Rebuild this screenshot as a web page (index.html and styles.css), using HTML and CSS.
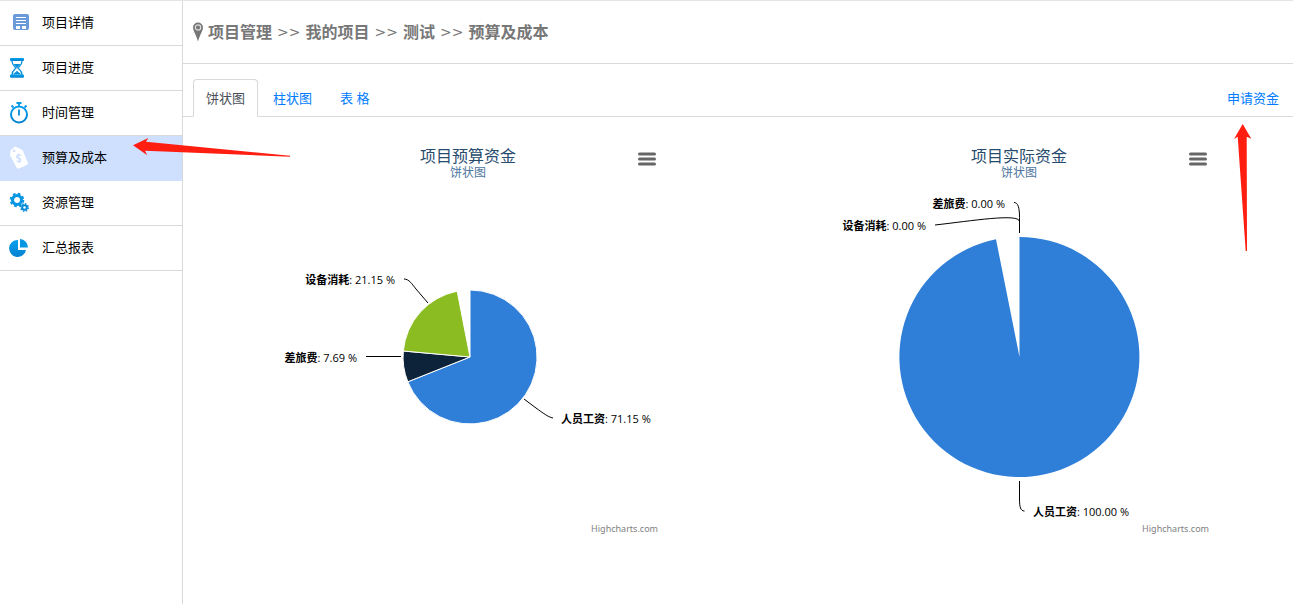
FILE: index.html
```html
<!DOCTYPE html>
<html lang="zh-CN">
<head>
<meta charset="utf-8">
<meta name="viewport" content="width=device-width, initial-scale=1">
<title>预算及成本</title>
<link rel="stylesheet" href="styles.css">
</head>
<body>
<svg class="defs" width="0" height="0" aria-hidden="true">
  <linearGradient id="blue" x1="0" y1="0" x2="0" y2="1"><stop offset="0" stop-color="#00a0ee"/><stop offset="1" stop-color="#0782cf"/></linearGradient>
</svg>
<div class="layout">
  <nav class="sidebar">
    <a class="side-link" href="#"><svg class="side-icon" viewBox="0 0 24 24" aria-hidden="true"><rect x="4" y="3" width="16" height="16" rx="2" fill="#6a9bd8"/><path d="M7 6.500h10M7 9.500h10M7 12.500h10" stroke="#fff" stroke-width="1"/><path d="M7 15h4v3H7zM13 15h4v3h-4z" fill="#fff"/></svg><span class="side-text">项目详情</span></a>
    <a class="side-link" href="#"><svg class="side-icon" viewBox="0 0 24 24" aria-hidden="true"><rect x="1" y="2" width="14" height="3" rx="1" fill="url(#blue)"/><rect x="1" y="18.500" width="14" height="3.300" rx="1" fill="url(#blue)"/><path d="M3 5c0 4 2 5 4 7-2 2-4 3-4 7M13 5c0 4-2 5-4 7 2 2 4 3 4 7" fill="none" stroke="#0a91dc" stroke-width="1.300"/><path d="M4.500 8h7L8 12zM4 18.500c1-2 3-2 4-4 1 2 3 2 4 4z" fill="#0a91dc"/></svg><span class="side-text">项目进度</span></a>
    <a class="side-link" href="#"><svg class="side-icon" viewBox="0 0 24 24" aria-hidden="true"><circle cx="10" cy="13.500" r="8" fill="none" stroke="url(#blue)" stroke-width="2"/><path d="M7.500 2h5M10 2v4M2.500 4.500l2 2M15.500 6.500l2-2" stroke="#0898e4" stroke-width="1.800"/><path d="M10 8.500v6" stroke="#078bd7" stroke-width="1.800"/></svg><span class="side-text">时间管理</span></a>
    <a class="side-link active" href="#"><svg class="side-icon" viewBox="0 0 24 24" aria-hidden="true"><path fill="#fff" fill-rule="evenodd" d="M1.500 4.500L6 .5l7.500 3.500 5.500 13c0 1-.5 1.500-1.300 2L10 22.600c-1 .4-2 0-2.500-1L1 9zM5 3.500a1.300 1.300 0 1 0 .1 0z"/><path d="M12 9.500c-1.500-1.300-5-.4-4.500 1.500.5 2 4 .5 4.300 2.700.2 2-3 2.500-4 1M8.800 7.500l2 9.500" fill="none" stroke="#cfe0ff" stroke-width="1.300"/></svg><span class="side-text">预算及成本</span></a>
    <a class="side-link" href="#"><svg class="side-icon" viewBox="0 0 24 24" aria-hidden="true"><circle cx="8" cy="9" r="4.500" fill="none" stroke="#0796e2" stroke-width="3"/><circle cx="8" cy="9" r="6.300" fill="none" stroke="#0796e2" stroke-width="2" stroke-dasharray="2.700 2.248"/><circle cx="15.500" cy="16.500" r="2.300" fill="none" stroke="#078bd7" stroke-width="2"/><circle cx="15.500" cy="16.500" r="3.700" fill="none" stroke="#078bd7" stroke-width="1.500" stroke-dasharray="1.500 1.406"/></svg><span class="side-text">资源管理</span></a>
    <a class="side-link" href="#"><svg class="side-icon" viewBox="0 0 24 24" aria-hidden="true"><path d="M9 4a8.500 8.500 0 1 0 8 10H9z" fill="url(#blue)"/><path d="M11 3v8.500h8A8.500 8.500 0 0 0 11 3z" fill="#0796e2"/></svg><span class="side-text">汇总报表</span></a>
    <svg class="pointer pointer-left" viewBox="0 0 158 20" aria-hidden="true"><path d="M0 8.300L15.300 1 13 4.700 157 18.700v1L12 13.700l2.300 4.600z"/></svg>
  </nav>
  <main class="main">
    <header class="crumbs">
      <svg class="pin" viewBox="0 0 10 20" aria-hidden="true"><path d="M5 .5a5 5 0 0 0-5 5C0 9 3 12 5 19.500 7 12 10 9 10 5.500a5 5 0 0 0-5-5z" fill="#777"/><circle cx="5" cy="5.500" r="2.700" fill="none" stroke="#ddd" stroke-width="1.200"/></svg>
      <span>项目管理</span><span class="sep">&gt;&gt;</span><span>我的项目</span><span class="sep">&gt;&gt;</span><span>测试</span><span class="sep">&gt;&gt;</span><span>预算及成本</span>
    </header>
    <div class="tabs">
      <a class="tab active" href="#">饼状图</a>
      <a class="tab" href="#">柱状图</a>
      <a class="tab" href="#">表 格</a>
      <a class="apply" href="#">申请资金</a>
      <svg class="pointer pointer-up" viewBox="0 0 18 128" aria-hidden="true"><path d="M8.700 0l8.600 14.700-4.600-2L13 127h-1.300L3.700 12.700 0 15z"/></svg>
    </div>
    <div class="charts">
      <section class="chart">
        <svg class="plot" viewBox="0 0 400 400" role="img" aria-label="项目预算资金">
          <text class="title" x="200" y="25">项目预算资金</text>
          <text class="subtitle" x="200" y="40">饼状图</text>
          <g stroke="#fff" stroke-linejoin="round">
            <path fill="#2f7ed8" d="M202 220V153A67 67 0 1 1 139.800 244.800z"/>
            <path fill="#0d233a" d="M202 220L139.800 244.800A67 67 0 0 1 135.300 214z"/>
            <path fill="#8bbc21" d="M202 220L135.300 214A67 67 0 0 1 189.200 154.200z"/>
          </g>
          <path class="lead" d="M136 142c5 0 8 5 12 10l12 14M98 219.500h35M256 262l12 9c7 5 12 9 17 10"/>
          <text class="label" x="127" y="147" text-anchor="end"><tspan>设备消耗</tspan>: 21.15 %</text>
          <text class="label" x="89" y="225" text-anchor="end"><tspan>差旅费</tspan>: 7.69 %</text>
          <text class="label" x="293" y="286"><tspan>人员工资</tspan>: 71.15 %</text>
          <text class="credit" x="390" y="395">Highcharts.com</text>
        </svg>
        <button class="menu" type="button" aria-label="图表菜单"><svg viewBox="0 0 18 14" aria-hidden="true"><path d="M1.500 2h15M1.500 7h15M1.500 12h15"/></svg></button>
      </section>
      <section class="chart">
        <svg class="plot" viewBox="0 0 400 400" role="img" aria-label="项目实际资金">
          <text class="title" x="200" y="25">项目实际资金</text>
          <text class="subtitle" x="200" y="40">饼状图</text>
          <path fill="#2f7ed8" d="M200.500 220V100A120 120 0 1 1 177 102.300z"/>
          <path class="lead" d="M195 65.500c4 0 5.500 5 5.500 15V96M116 88c36-4 84-12 84.500-3.500M200.500 344v18c0 8 1 12 5 12"/>
          <text class="label" x="186" y="71" text-anchor="end"><tspan>差旅费</tspan>: 0.00 %</text>
          <text class="label" x="107" y="93" text-anchor="end"><tspan>设备消耗</tspan>: 0.00 %</text>
          <text class="label" x="214" y="379"><tspan>人员工资</tspan>: 100.00 %</text>
          <text class="credit" x="390" y="395">Highcharts.com</text>
        </svg>
        <button class="menu" type="button" aria-label="图表菜单"><svg viewBox="0 0 18 14" aria-hidden="true"><path d="M1.500 2h15M1.500 7h15M1.500 12h15"/></svg></button>
      </section>
    </div>
  </main>
</div>
</body>
</html>
```
FILE: styles.css
```css
* { box-sizing: border-box; }
body {
  margin: 0;
  background: #fff;
  color: #000;
  font: 13px/20px "Open Sans", "Noto Sans CJK SC", sans-serif;
}
a { text-decoration: none; }
.defs { position: absolute; }
.layout {
  display: flex;
  min-height: 100vh;
  border-top: 1px solid #e4e4e4;
}
.sidebar {
  position: relative;
  flex: 0 0 183px;
  border-right: 1px solid #d9d9d9;
}
.side-link {
  display: flex;
  align-items: center;
  gap: 9px;
  height: 45px;
  padding-left: 9px;
  border-bottom: 1px solid #d9d9d9;
  color: #000;
}
.side-link.active {
  background: #cfe0ff;
  border-color: #cfe0ff;
}
.side-icon { width: 24px; height: 24px; }
.side-text { padding-bottom: 2px; }
.main { flex: 1; min-width: 0; }
.crumbs {
  display: flex;
  align-items: center;
  gap: 5px;
  height: 63px;
  padding-left: 10px;
  border-bottom: 1px solid #d9d9d9;
  color: #777;
  font-size: 16px;
  font-weight: 700;
}
.pin { width: 10px; height: 20px; }
.sep {
  font-family: "DejaVu Sans", sans-serif;
  font-size: 14px;
  font-weight: 400;
}
.tabs {
  position: relative;
  display: flex;
  align-items: flex-end;
  gap: 2px;
  padding: 15px 14px 0 10px;
  border-bottom: 1px solid #d9d9d9;
}
.tab {
  margin-bottom: -1px;
  padding: 8px 12px;
  border: 1px solid transparent;
  border-radius: 4px 4px 0 0;
  color: #007bff;
}
.tab.active {
  background: #fff;
  border-color: #d9d9d9 #d9d9d9 #fff;
  color: #495057;
}
.apply {
  margin-left: auto;
  padding: 8px 0;
  color: #007bff;
}
.charts {
  display: grid;
  grid-template-columns: 1fr 1fr;
  gap: 2px;
  padding: 20px 0 0 10px;
}
.chart {
  position: relative;
  width: 100%;
  max-width: 400px;
  justify-self: center;
}
.plot { display: block; width: 100%; }
.title { font-size: 16px; fill: #274b6d; text-anchor: middle; }
.subtitle { font-size: 12px; fill: #4d759e; text-anchor: middle; }
.label { font-size: 11px; fill: #000; }
.label tspan { font-weight: 700; }
.credit { font-family: "Noto Sans", sans-serif; font-size: 9px; fill: #808080; text-anchor: end; }
.lead { fill: none; stroke: #000; stroke-width: 1; }
.menu {
  position: absolute;
  top: 10px;
  right: 9px;
  display: grid;
  place-items: center;
  width: 24px;
  height: 24px;
  padding: 0;
  border: 0;
  background: none;
}
.menu svg {
  width: 18px;
  height: 14px;
  stroke: #666;
  stroke-width: 3;
  stroke-linecap: round;
}
.pointer { position: absolute; z-index: 2; fill: #ff1e10; pointer-events: none; }
.pointer-left { top: 136px; left: 133px; width: 158px; height: 20px; }
.pointer-up { top: 60px; right: 41px; width: 18px; height: 128px; }
```
